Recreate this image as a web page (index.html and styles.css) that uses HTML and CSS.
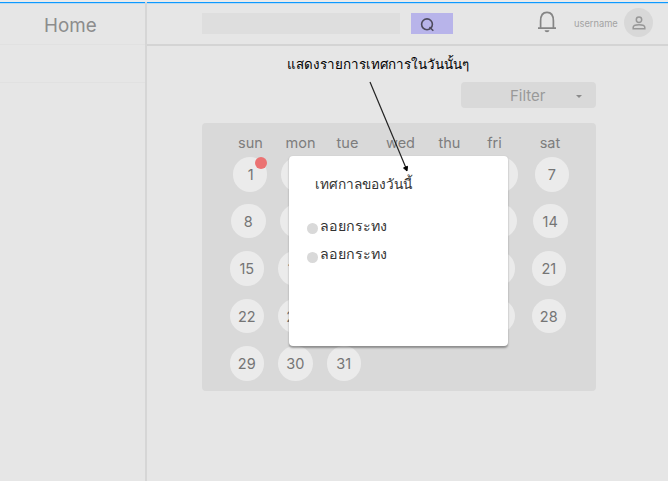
FILE: index.html
```html
<!DOCTYPE html>
<html lang="th">
<head>
<meta charset="utf-8">
<title>Home</title>
<link rel="stylesheet" href="styles.css">
</head>
<body>
<div class="app">
  <aside class="sidebar">
    <h1 class="brand">Home</h1>
    <div class="side-item"></div>
  </aside>
  <div class="content">
    <header class="topbar">
      <div class="search"></div>
      <button class="search-btn" aria-label="search">
        <svg width="16" height="16" viewBox="0 0 16 16" fill="none" stroke="#4d4a5c" stroke-width="1.6"><circle cx="7" cy="7.300" r="5.400"/><path d="M9.500 10L13.300 13.800"/></svg>
      </button>
      <svg class="bell" width="20" height="22" viewBox="0 0 20 22" fill="none" stroke="#858585" stroke-width="1.7"><path d="M1 17.200H19M3.600 17V10C3.600 4.800 5.500 1.400 10 1.400S16.400 4.800 16.400 10V17"/><path d="M7.600 19.200h4.800c0 1.300-1.200 2-2.400 2s-2.400-.7-2.400-2z" fill="#858585" stroke="none"/></svg>
      <span class="username">username</span>
      <div class="avatar">
        <svg width="14" height="14" viewBox="0 0 14 14" fill="none" stroke="#979797" stroke-width="1.5"><circle cx="7" cy="3.700" r="2.700"/><path d="M1.200 12.700V11.300C1.200 9.600 4 8.700 7 8.700S12.800 9.600 12.800 11.300V12.700Z"/></svg>
      </div>
    </header>
    <main class="main">
      <p class="note">แสดงรายการเทศการในวันนั้นๆ</p>
      <div class="filter"><span>Filter</span><i class="caret"></i></div>
      <section class="calendar">
        <div class="weekdays"><span>sun</span><span>mon</span><span>tue</span><span>wed</span><span>thu</span><span>fri</span><span>sat</span></div>
        <div class="week w1"><span class="marked">1</span><span></span><span></span><span></span><span></span><span></span><span>7</span></div>
        <div class="week w2"><span>8</span><span></span><span></span><span></span><span></span><span></span><span>14</span></div>
        <div class="week w3"><span>15</span><span>16</span><span></span><span></span><span></span><span></span><span>21</span></div>
        <div class="week w4"><span>22</span><span>23</span><span></span><span></span><span></span><span></span><span>28</span></div>
        <div class="week w5"><span>29</span><span>30</span><span>31</span></div>
        <div class="popup">
          <h2>เทศกาลของวันนี้</h2>
          <ul><li>ลอยกระทง</li><li>ลอยกระทง</li></ul>
        </div>
      </section>
    </main>
  </div>
  <svg class="arrow" width="42" height="92" viewBox="0 0 42 92"><path d="M1 1L37 87" stroke="#222" stroke-width="1.200"/><path d="M34.500 87L38.500 85.300L38 90Z" fill="#000" stroke="#000"/></svg>
</div>
</body>
</html>
```
FILE: styles.css
```css
* { box-sizing: border-box; }
body { margin: 0; background: #fff; font-family: Inter, "Noto Sans", "Liberation Sans", sans-serif; }
.app { position: relative; display: flex; width: 668px; height: 481px; border-top: 2px solid #ebebeb; background: #e6e6e6; box-shadow: inset 0 1px #0d99ff, inset 0 2px #b9d9f0; }
.sidebar { width: 147px; border-right: 2px solid #d6d6d6; }
.brand { margin: 0; height: 43px; padding: 2px 0 0 44px; border-bottom: 1px solid #e1e1e1; font-size: 18.800px; font-weight: 400; line-height: 43px; color: #8c8c8c; }
.side-item { height: 38px; border-bottom: 1px solid #e1e1e1; }
.content { flex: 1; }
.topbar { display: flex; align-items: flex-start; height: 44px; padding-left: 55px; border-bottom: 2px solid #d4d4d4; }
.search { width: 198px; height: 20.500px; margin-top: 11px; background: #dedede; }
.search-btn { width: 42px; height: 20.500px; margin: 11px 0 0 11px; padding: 3px 0 0 9px; border: 0; background: #b8b4ea; text-align: left; }
.search-btn svg { display: block; }
.bell { margin: 9px 0 0 84px; }
.username { width: 44px; margin: 15px 0 0 17px; font-size: 9.300px; line-height: 14px; color: #a3a3a3; }
.avatar { display: grid; place-items: center; width: 29px; height: 29px; margin: 6px 0 0 6px; border-radius: 50%; background: #d8d8d8; }
.main { padding-left: 54.500px; }
.note { width: 200px; height: 36px; margin: 0 0 0 85px; padding-top: 6px; font: 13.400px/24px "Noto Sans", sans-serif; color: #000; white-space: nowrap; }
.filter { display: flex; align-items: center; width: 135px; height: 26px; margin-left: 259.500px; padding-left: 49px; border-radius: 4px; background: #d9d9d9; font-size: 15px; color: #999; }
.caret { margin: 2px 0 0 30px; border: 3px solid transparent; border-top: 3px solid #8b8b8b; border-bottom: 0; }
.calendar { position: relative; width: 394.500px; height: 268.500px; margin-top: 14.500px; padding-top: 11px; border-radius: 4px; background: #d9d9d9; }
.weekdays { display: grid; grid-template-columns: 50px 50px 44px 62px 36px 54px 57px; padding-left: 24px; font-size: 14.500px; line-height: 18px; color: #7d7d7d; text-align: center; }
.week { display: grid; grid-template-columns: 48.500px 48.500px 51px 51px 52px 51px 35px; margin-left: 28px; font-size: 14.500px; color: #757575; }
.week span { position: relative; width: 34.500px; height: 34.500px; border-radius: 50%; background: #ebebeb; line-height: 35.500px; text-align: center; }
.week .marked { padding-left: 2px; }
.w1 { margin: 5.500px 0 0 31px; }
.w2 { margin: 12px 0 0 29.500px; }
.w3 { margin-top: 13px; }
.w4 { margin-top: 13px; }
.w5 { margin-top: 13px; }
.marked::after { content: ""; position: absolute; top: 0; right: 0; width: 12px; height: 12px; border-radius: 50%; background: #eb7272; }
.popup { position: absolute; left: 87px; top: 33px; width: 219.500px; height: 190.500px; padding: 17px 0 0 26px; border-radius: 4px; background: #fff; box-shadow: 0 1.500px 2px rgba(0,0,0,.35); color: #333; }
.popup h2 { margin: 0; font-size: 13.700px; font-weight: 500; line-height: 22px; }
.popup ul { margin: 17px 0 0 -8px; padding: 0; list-style: none; font-size: 14.200px; font-weight: 500; line-height: 22px; }
.popup li { display: flex; align-items: center; gap: 2px; height: 28.500px; white-space: nowrap; }
.popup li::before { content: ""; width: 11px; height: 11px; margin-top: 6px; border-radius: 50%; background: #d9d9d9; }
.arrow { position: absolute; left: 369px; top: 79px; }
```
